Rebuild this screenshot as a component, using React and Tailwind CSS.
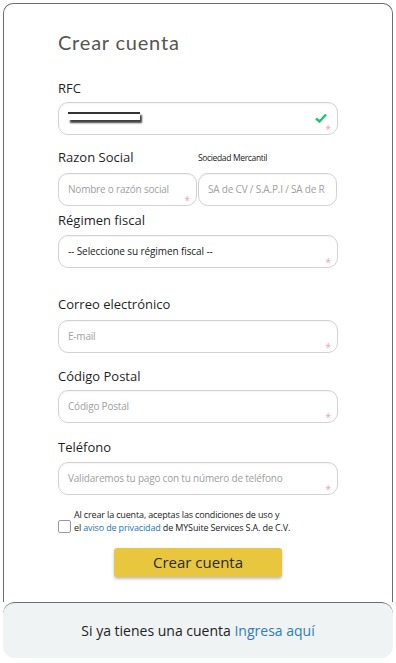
import { useState } from "react";

const Star = () => (
  <span className="pointer-events-none absolute bottom-[0px] right-[6px] text-[10px] leading-none text-[#f3a0a8]">
    *
  </span>
);

const Field = ({ placeholder, className = "", children, star = true }) => (
  <div
    className={[
      "relative flex h-[33px] items-center rounded-[10px] border border-[#d2d2d2] bg-white px-[9px] shadow-[inset_0_1px_1px_rgba(0,0,0,0.04)]",
      className,
    ].join(" ")}
  >
    {children ?? (
      <input
        placeholder={placeholder}
        className="w-full bg-transparent text-[10px] tracking-[-0.2px] text-[#333] outline-none placeholder:text-[#a0a0a0]"
      />
    )}
    {star && <Star />}
  </div>
);

const Label = ({ children, className = "" }) => (
  <p className={["text-[13px] leading-[18px] text-[#1f1f1f]", className].join(" ")}>{children}</p>
);

export default function App() {
  const [accepted, setAccepted] = useState(false);

  return (
    <div
      className="h-[663px] w-[396px] bg-white pt-[3px]"
      style={{ fontFamily: '"Open Sans", "Noto Sans", sans-serif' }}
    >
      <div className="mx-[3px] h-[599px] rounded-t-[10px] border-x border-t border-[#6e6e6e] px-[54px] pt-[26px]">
        <h1
          className="text-[20px] leading-[24px] tracking-[0.8px] text-[#555555]"
          style={{ fontFamily: "Lato, sans-serif" }}
        >
          Crear cuenta
        </h1>

        {/* RFC */}
        <Label className="mt-[25px]">RFC</Label>
        <Field className="mt-[5px]">
          <div className="mt-[-5px] h-[8px] w-[72px] border-t-2 border-[#333] bg-white shadow-[2px_3px_2px_rgba(0,0,0,0.75)]" />
          <svg
            viewBox="0 0 12 10"
            className="absolute right-[10px] top-[10px] h-[10px] w-[12px]"
          >
            <path d="M1 5.5 L4.5 8.5 L11 1.5" fill="none" stroke="#22c07a" strokeWidth="2.4" />
          </svg>
        </Field>

        {/* razon social */}
        <div className="mt-[13px] flex items-end">
          <Label className="w-[140px]">Razon Social</Label>
          <span className="mb-[2px] text-[8.5px] leading-[12px] tracking-[-0.35px] text-[#222]">
            Sociedad Mercantil
          </span>
        </div>
        <div className="mt-[7px] flex gap-[1px]">
          <Field placeholder="Nombre o razón social" className="w-[139px]" />
          <Field placeholder="SA de CV / S.A.P.I / SA de R" className="w-[139px] px-[6px]" star={false} />
        </div>

        {/* regimen */}
        <Label className="mt-[5px]">Régimen fiscal</Label>
        <Field className="mt-[6px]">
          <span className="text-[10px] tracking-[-0.1px] text-[#222]">-- Seleccione su régimen fiscal --</span>
        </Field>

        <Label className="mt-[27px]">Correo electrónico</Label>
        <Field placeholder="E-mail" className="mt-[7px]" />

        <Label className="mt-[14px]">Código Postal</Label>
        <Field placeholder="Código Postal" className="mt-[5px]" />

        <Label className="mt-[15px]">Teléfono</Label>
        <Field placeholder="Validaremos tu pago con tu número de teléfono" className="mt-[6px]" />

        {/* terminos */}
        <label className="mt-[13px] flex items-end gap-[3px]">
          <input
            type="checkbox"
            checked={accepted}
            onChange={(e) => setAccepted(e.target.checked)}
            className="mb-[1px] h-[13px] w-[13px] shrink-0 appearance-none rounded-[2px] border border-[#9a9a9a] bg-white"
          />
          <span className="text-[9px] leading-[13px] tracking-[-0.15px] text-[#222]">
            Al crear la cuenta, aceptas las condiciones de uso y
            <br />
            el <a className="text-[#1f78b4]">aviso de privacidad</a> de MYSuite Services S.A. de C.V.
          </span>
        </label>

        <div className="mt-[14px] flex justify-center">
          <button className="h-[29px] w-[168px] rounded-[3px] bg-[#e8c73e] text-[15px] text-[#2a2a2a] shadow-[0_2px_3px_rgba(0,0,0,0.25)]">
            Crear cuenta
          </button>
        </div>
      </div>

      <div className="mx-[3px] flex h-[56px] items-center justify-center rounded-[12px] border-t border-[#6e6e6e] bg-[#f0f3f4] text-[14px] text-[#222]">
        Si ya tienes una cuenta&nbsp;<a className="text-[#2a80b9]">Ingresa aquí</a>
      </div>
    </div>
  );
}
